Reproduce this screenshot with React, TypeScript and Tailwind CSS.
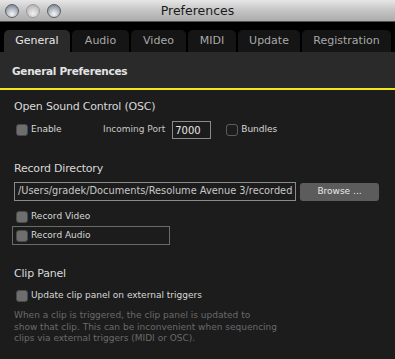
import React from "react";

const font = { fontFamily: '"DejaVu Sans", "Liberation Sans", sans-serif' };

function Light({ dim }: { dim?: boolean }) {
  return (
    <div
      className={
        "w-[14px] h-[14px] rounded-full border " +
        (dim
          ? "border-[#9a9a9a] bg-[radial-gradient(circle_at_50%_70%,#f0f0f0_0%,#c8c8c8_55%,#a8a8a8_100%)]"
          : "border-[#5a6068] bg-[radial-gradient(circle_at_50%_75%,#f4f6f8_0%,#b8bec6_45%,#6c737c_100%)]")
      }
    />
  );
}

function Check({ filled }: { filled?: boolean }) {
  return (
    <div
      className={
        "w-[12px] h-[12px] rounded-[3px] border shrink-0 " +
        (filled ? "bg-[#6e6e6e] border-[#4a4a4a]" : "bg-transparent border-[#5c5c5c]")
      }
    />
  );
}

const tabs = [
  { name: "General", w: 66 },
  { name: "Audio", w: 57 },
  { name: "Video", w: 55 },
  { name: "MIDI", w: 48 },
  { name: "Update", w: 62 },
  { name: "Registration", w: 89 },
];

export default function App() {
  return (
    <div className="w-[395px] h-[359px] bg-[#1c1c1c] overflow-hidden flex flex-col" style={font}>
      {/* Title bar */}
      <div className="h-[22px] relative flex items-center px-[5px] gap-[7px] bg-[linear-gradient(#e6e6e6,#c4c4c4_50%,#acacac)] border-b border-[#505050] shrink-0">
        <Light />
        <Light dim />
        <Light />
        <div className="absolute inset-0 pt-[2px] flex items-center justify-center text-[12.5px] text-[#1a1a1a]">Preferences</div>
      </div>
      {/* Tab bar */}
      <div className="h-[30px] bg-black flex items-end pl-[4px] gap-[2px] shrink-0">
        {tabs.map((t, i) => (
          <div
            key={t.name}
            style={{ width: t.w }}
            className={
              "h-[22px] pt-[1px] rounded-t-[5px] flex items-center justify-center text-[11px] " +
              (i === 0 ? "bg-[#2a2a2a] text-[#e6e6e6]" : "bg-[#151515] text-[#a8a8a8]")
            }
          >
            {t.name}
          </div>
        ))}
      </div>
      {/* Header */}
      <div className="h-[38px] pt-[3px] bg-[#2a2a2a] border-b-2 border-[#f0e81a] flex items-center px-[12px] text-[10.5px] tracking-[-0.3px] font-bold text-[#e4e4e4] shrink-0">
        General Preferences
      </div>
      {/* Body */}
      <div className="flex flex-col px-[14px] pt-[10px] text-[#d8d8d8]">
        <div className="text-[11px] leading-[14px] tracking-[-0.2px]">Open Sound Control (OSC)</div>
        <div className="flex items-center mt-[7px] h-[18px] text-[9px]">
          <div className="flex items-center gap-[3px] pl-[2px] w-[89px]">
            <Check filled />
            <span>Enable</span>
          </div>
          <span className="text-[#c8c8c8]">Incoming Port</span>
          <div className="ml-[7px] w-[39px] h-[18px] border border-[#8a8a8a] flex items-center pl-[2px] text-[10px] text-[#e8e8e8]">7000</div>
          <div className="flex items-center gap-[3px] ml-[15px]">
            <Check />
            <span>Bundles</span>
          </div>
        </div>

        <div className="text-[11px] leading-[14px] tracking-[-0.2px] mt-[23px]">Record Directory</div>
        <div className="flex items-center gap-[4px] mt-[6px]">
          <div className="w-[282px] h-[19px] border border-[#8a8a8a] flex items-center pl-[3px] text-[9.8px] text-[#c8c8c8] overflow-hidden whitespace-nowrap">
            /Users/gradek/Documents/Resolume Avenue 3/recorded
          </div>
          <div className="w-[79px] h-[18px] rounded-[3px] bg-[#5c5c5c] flex items-center justify-center text-[9px] text-[#e8e8e8]">Browse ...</div>
        </div>
        <div className="flex items-center gap-[3px] pl-[2px] mt-[9px] h-[13px] text-[9px]">
          <Check filled />
          <span>Record Video</span>
        </div>
        <div className="flex items-center gap-[3px] pl-[3px] ml-[-2px] mt-[3px] w-[158px] h-[19px] border border-[#6a6a6a] text-[9px]">
          <Check filled />
          <span>Record Audio</span>
        </div>

        <div className="text-[11px] leading-[14px] tracking-[-0.2px] mt-[22px]">Clip Panel</div>
        <div className="flex items-center gap-[3px] pl-[2px] mt-[8px] h-[13px] text-[9px]">
          <Check filled />
          <span>Update clip panel on external triggers</span>
        </div>
        <div className="mt-[8px] text-[9px] leading-[11.5px] text-[#6a6a6a]">
          When a clip is triggered, the clip panel is updated to
          <br />
          show that clip. This can be inconvenient when sequencing
          <br />
          clips via external triggers (MIDI or OSC).
        </div>
      </div>
    </div>
  );
}
